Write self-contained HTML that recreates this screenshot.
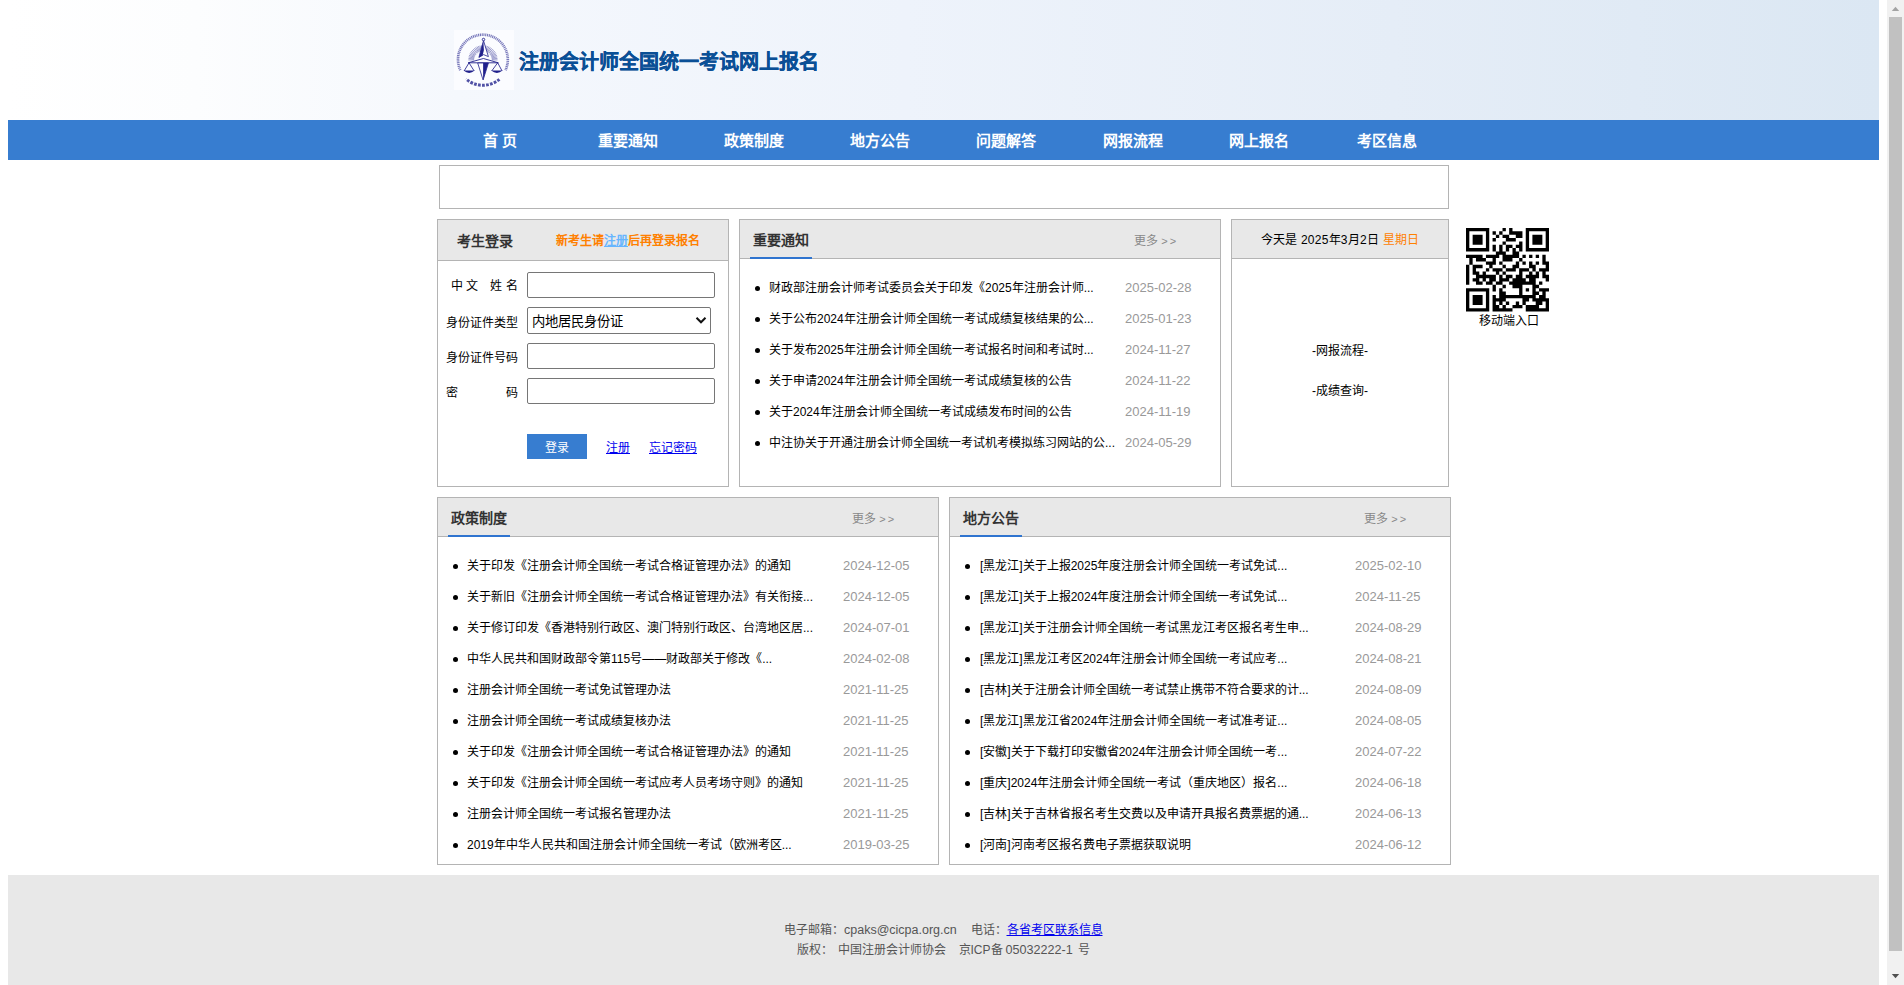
<!DOCTYPE html>
<html lang="zh-CN">
<head>
<meta charset="utf-8">
<title>注册会计师全国统一考试网上报名</title>
<style>
*{box-sizing:border-box;}
html,body{margin:0;padding:0;}
html{overflow:hidden;background:#fff;}
body{width:1904px;height:985px;position:relative;overflow:hidden;background:#fff;
  font-family:"Liberation Sans",sans-serif;font-size:12px;color:#000;}
a{color:#0000ee;text-decoration:underline;}
.abs{position:absolute;}
/* header */
#hdr{position:absolute;left:8px;top:0;width:1871px;height:120px;
  background:linear-gradient(90deg,#ffffff 0%,#fcfdfe 10%,#f5f8fd 24%,#eef3fb 48%,#e5edf7 74%,#dbe7f3 100%);}
#logo{position:absolute;left:454px;top:30px;width:60px;height:60px;background:#fbfcff;}
#title{position:absolute;left:519px;top:47px;height:30px;line-height:30px;font-size:20px;font-weight:bold;color:#0a4f96;-webkit-text-stroke:0.3px #0a4f96;white-space:nowrap;letter-spacing:0;}
/* nav */
#nav{position:absolute;left:8px;top:120px;width:1871px;height:40px;background:#377dd0;}
#nav span{position:absolute;top:0;width:126px;height:40px;line-height:42px;text-align:center;color:#fff;font-size:15px;font-weight:bold;white-space:nowrap;}
/* boxes */
.box{position:absolute;border:1px solid #b4b4b4;background:#fff;}
.hd{position:absolute;left:0;top:0;right:0;background:#e8e8e8;border-bottom:1px solid #b4b4b4;}
.hd .t{position:absolute;left:10px;top:0;width:62px;text-align:center;font-size:14px;font-weight:bold;color:#333;border-bottom:2px solid #2f74cf;white-space:nowrap;}
.more{position:absolute;font-size:12px;color:#888;white-space:nowrap;}
ul.lst{position:absolute;left:0;right:0;margin:0;padding:0;list-style:none;}
ul.lst li{position:relative;height:31px;line-height:31px;white-space:nowrap;font-size:12px;color:#000;}
ul.lst li:before{content:"";position:absolute;left:14.5px;top:13.5px;width:5px;height:5px;border-radius:50%;background:#000;}
ul.lst li b{font-weight:normal;position:absolute;left:30px;top:1px;}
ul.lst li i{font-style:normal;position:absolute;top:0;color:#999;font-size:13px;}
/* footer */
#ft{position:absolute;left:8px;top:875px;width:1871px;height:120px;background:#e8e8e8;color:#555;font-size:12px;text-align:center;}
#ft div{position:absolute;left:0;right:0;height:20px;line-height:20px;white-space:nowrap;}
/* scrollbar */
#sb{position:absolute;left:1887px;top:0;width:17px;height:985px;background:#f1f1f1;}
#sb .th{position:absolute;left:2px;top:17px;width:13px;height:934px;background:#c1c1c1;}
#sb .up{position:absolute;left:5px;top:7px;width:0;height:0;border-left:3.5px solid transparent;border-right:3.5px solid transparent;border-bottom:4px solid #a3a3a3;}
#sb .dn{position:absolute;left:5px;top:974px;width:0;height:0;border-left:3.5px solid transparent;border-right:3.5px solid transparent;border-top:4px solid #505050;}
/* form */
.lb{position:absolute;left:8px;width:72px;height:20px;line-height:20px;font-size:12px;color:#000;text-align:justify;text-align-last:justify;white-space:nowrap;}
.inp{position:absolute;left:89px;width:188px;height:26px;border:1px solid #767676;border-radius:2px;background:#fff;}
</style>
</head>
<body>
<div id="hdr"></div>
<div id="logo"><svg width="60" height="60" viewBox="0 0 60 60" style="display:block"><path d="M6.33 40.12A24.90 24.90 0 1 1 51.47 40.12" fill="none" stroke="#20208c" stroke-width="2.7" stroke-dasharray="1.1 0.7" opacity=".6"/><path d="M45.42 49.29A25.70 25.70 0 0 1 12.04 49.00" fill="none" stroke="#20208c" stroke-width="3" stroke-dasharray="2.7 1.3" opacity=".78"/><path d="M20.05 29.90L14.35 29.90M20.10 28.97L14.43 28.37M20.24 28.05L14.67 26.86M20.49 27.15L15.06 25.39M20.82 26.28L15.61 23.96M21.24 25.45L16.31 22.60M21.75 24.67L17.14 21.32M22.34 23.94L18.10 20.13M22.99 23.29L19.18 19.05M23.72 22.70L20.37 18.09M24.50 22.19L21.65 17.26M25.33 21.77L23.01 16.56M26.20 21.44L24.44 16.01M27.10 21.19L25.91 15.62M28.02 21.05L27.42 15.38M28.95 21.00L28.95 15.30M29.88 21.05L30.48 15.38M30.80 21.19L31.99 15.62M31.70 21.44L33.46 16.01M32.57 21.77L34.89 16.56M33.40 22.19L36.25 17.26M34.18 22.70L37.53 18.09M34.91 23.29L38.72 19.05M35.56 23.94L39.80 20.13M36.15 24.67L40.76 21.32M36.66 25.45L41.59 22.60M37.08 26.28L42.29 23.96M37.41 27.15L42.84 25.39M37.66 28.05L43.23 26.86M37.80 28.97L43.47 28.37M37.85 29.90L43.55 29.90" fill="none" stroke="#20208c" stroke-width=".55" opacity=".8"/><path d="M14.2 32.8L29.4 28.5L44.3 32.8z" fill="#fdfdff" stroke="#20208c" stroke-width=".9" stroke-linejoin="round"/><path d="M29.5 10.6L34.4 26.6L29.6 24.6L24.9 27.4z" fill="#fdfdff" stroke="#20208c" stroke-width=".8" stroke-linejoin="round"/><path d="M29.3 11.2L24.9 27.4L28.6 25.6L29.9 20z" fill="#20208c"/><path d="M23.7 33L34.4 33L29.1 50z" fill="#fdfdff" stroke="#20208c" stroke-width=".8" stroke-linejoin="round"/><path d="M29.1 33L34.4 33L29.1 50z" fill="#20208c"/><circle cx="29.5" cy="9.5" r="1.25" fill="#fdfdff" stroke="#20208c" stroke-width=".9"/><path d="M10.1 41L15.0 32.8L20.2 41" fill="none" stroke="#20208c" stroke-width=".85" stroke-linejoin="round"/><path d="M9.6 40.6L20.7 40.6Q15.1 45.2 9.6 40.6z" fill="#20208c"/><path d="M37.7 41L43.7 32.8L48.1 41" fill="none" stroke="#20208c" stroke-width=".85" stroke-linejoin="round"/><path d="M37.2 40.6L48.6 40.6Q42.9 45.2 37.2 40.6z" fill="#20208c"/></svg></div>
<div id="title">注册会计师全国统一考试网上报名</div>

<div id="nav">
  <span style="left:429px">首 页</span>
  <span style="left:557px">重要通知</span>
  <span style="left:683px">政策制度</span>
  <span style="left:809px">地方公告</span>
  <span style="left:935px">问题解答</span>
  <span style="left:1062px">网报流程</span>
  <span style="left:1188px">网上报名</span>
  <span style="left:1316px">考区信息</span>
</div>

<!-- banner -->
<div class="box" style="left:439px;top:165px;width:1010px;height:44px;"></div>

<!-- login -->
<div class="box" id="login" style="left:437px;top:219px;width:292px;height:268px;">
  <div class="hd" style="height:41px;">
    <div class="abs" style="left:19px;top:1px;height:40px;line-height:41px;font-size:14px;font-weight:bold;color:#333;white-space:nowrap;">考生登录</div>
    <div class="abs" style="left:118px;top:1px;height:40px;line-height:41px;font-size:12px;font-weight:bold;color:#ff8000;white-space:nowrap;">新考生请<span style="color:#66b5ff;text-decoration:underline;">注册</span>后再登录报名</div>
  </div>
  <div class="lb" style="top:56px;text-align:left;text-align-last:left;"><span class="abs" style="left:5px">中</span><span class="abs" style="left:20px">文</span><span class="abs" style="left:44px">姓</span><span class="abs" style="left:60px">名</span></div>
  <div class="inp" style="top:52px;"></div>
  <div class="lb" style="top:93px;">身份证件类型</div>
  <div class="inp" style="top:87px;width:184px;height:27px;"><span class="abs" style="left:4px;top:1px;height:25px;line-height:25px;font-size:13.33px;white-space:nowrap;">内地居民身份证</span>
    <svg class="abs" style="left:167px;top:8px;" width="12" height="9" viewBox="0 0 12 9"><path d="M1.5 1.8 L6 6.3 L10.5 1.8" fill="none" stroke="#111" stroke-width="2"/></svg></div>
  <div class="lb" style="top:128px;">身份证件号码</div>
  <div class="inp" style="top:123px;"></div>
  <div class="lb" style="top:163px;text-align:left;text-align-last:left;"><span class="abs" style="left:0">密</span><span class="abs" style="left:60px">码</span></div>
  <div class="inp" style="top:158px;"></div>
  <div class="abs" style="left:89px;top:214px;width:60px;height:25px;line-height:29px;background:#377dd0;color:#fff;font-size:12px;text-align:center;">登录</div>
  <a class="abs" style="left:168px;top:218px;height:20px;line-height:20px;font-size:12px;white-space:nowrap;">注册</a>
  <a class="abs" style="left:211px;top:218px;height:20px;line-height:20px;font-size:12px;white-space:nowrap;">忘记密码</a>
</div>

<!-- notice -->
<div class="box" id="notice" style="left:739px;top:219px;width:482px;height:268px;">
  <div class="hd" style="height:39px;"><div class="t" style="height:39px;line-height:40px;">重要通知</div><div class="more" style="left:395px;top:0;height:38px;line-height:42px;margin-left:-1px;">更多 <span style="letter-spacing:2px;font-size:11px">&gt;&gt;</span></div></div>
  <ul class="lst" style="top:52px;">
    <li><b style="left:29px">财政部注册会计师考试委员会关于印发《2025年注册会计师...</b><i style="left:385px">2025-02-28</i></li>
    <li><b style="left:29px">关于公布2024年注册会计师全国统一考试成绩复核结果的公...</b><i style="left:385px">2025-01-23</i></li>
    <li><b style="left:29px">关于发布2025年注册会计师全国统一考试报名时间和考试时...</b><i style="left:385px">2024-11-27</i></li>
    <li><b style="left:29px">关于申请2024年注册会计师全国统一考试成绩复核的公告</b><i style="left:385px">2024-11-22</i></li>
    <li><b style="left:29px">关于2024年注册会计师全国统一考试成绩发布时间的公告</b><i style="left:385px">2024-11-19</i></li>
    <li><b style="left:29px">中注协关于开通注册会计师全国统一考试机考模拟练习网站的公...</b><i style="left:385px">2024-05-29</i></li>
  </ul>
</div>

<!-- date -->
<div class="box" id="date" style="left:1231px;top:219px;width:218px;height:268px;">
  <div class="hd" style="height:39px;line-height:41px;text-align:center;font-size:12px;color:#000;white-space:nowrap;letter-spacing:.22px;">今天是 2025年3月2日 <span style="color:#ff8000">星期日</span></div>
  <div class="abs" style="left:0;right:0;top:121px;height:20px;line-height:20px;text-align:center;">-网报流程-</div>
  <div class="abs" style="left:0;right:0;top:161px;height:20px;line-height:20px;text-align:center;">-成绩查询-</div>
</div>
<div class="abs" id="qr" style="left:1466px;top:228.4px;width:83px;height:83.6px;"><svg width="83" height="83.6" viewBox="0 0 25 25" preserveAspectRatio="none" style="display:block"><rect width="25" height="25" fill="#fff"/><path d="M0 0h7v1h-7zM11 0h1v1h-1zM13 0h1v1h-1zM18 0h7v1h-7zM0 1h1v1h-1zM6 1h1v1h-1zM8 1h1v1h-1zM10 1h1v1h-1zM13 1h4v1h-4zM18 1h1v1h-1zM24 1h1v1h-1zM0 2h1v1h-1zM2 2h3v1h-3zM6 2h1v1h-1zM9 2h1v1h-1zM11 2h2v1h-2zM15 2h2v1h-2zM18 2h1v1h-1zM20 2h3v1h-3zM24 2h1v1h-1zM0 3h1v1h-1zM2 3h3v1h-3zM6 3h1v1h-1zM8 3h1v1h-1zM12 3h3v1h-3zM18 3h1v1h-1zM20 3h3v1h-3zM24 3h1v1h-1zM0 4h1v1h-1zM2 4h3v1h-3zM6 4h1v1h-1zM11 4h1v1h-1zM16 4h1v1h-1zM18 4h1v1h-1zM20 4h3v1h-3zM24 4h1v1h-1zM0 5h1v1h-1zM6 5h1v1h-1zM8 5h1v1h-1zM10 5h1v1h-1zM12 5h2v1h-2zM15 5h2v1h-2zM18 5h1v1h-1zM24 5h1v1h-1zM0 6h7v1h-7zM8 6h1v1h-1zM10 6h1v1h-1zM12 6h1v1h-1zM14 6h1v1h-1zM16 6h1v1h-1zM18 6h7v1h-7zM9 7h3v1h-3zM14 7h2v1h-2zM0 8h5v1h-5zM6 8h4v1h-4zM11 8h5v1h-5zM17 8h1v1h-1zM19 8h1v1h-1zM21 8h1v1h-1zM23 8h1v1h-1zM1 9h1v1h-1zM3 9h3v1h-3zM8 9h1v1h-1zM11 9h3v1h-3zM16 9h1v1h-1zM23 9h1v1h-1zM1 10h1v1h-1zM6 10h3v1h-3zM10 10h1v1h-1zM15 10h1v1h-1zM17 10h1v1h-1zM19 10h1v1h-1zM21 10h1v1h-1zM23 10h2v1h-2zM0 11h1v1h-1zM2 11h3v1h-3zM7 11h1v1h-1zM11 11h1v1h-1zM14 11h2v1h-2zM19 11h2v1h-2zM24 11h1v1h-1zM0 12h1v1h-1zM2 12h1v1h-1zM6 12h1v1h-1zM8 12h3v1h-3zM12 12h3v1h-3zM16 12h3v1h-3zM20 12h1v1h-1zM22 12h3v1h-3zM0 13h1v1h-1zM2 13h2v1h-2zM5 13h1v1h-1zM9 13h1v1h-1zM11 13h1v1h-1zM16 13h1v1h-1zM19 13h1v1h-1zM21 13h1v1h-1zM23 13h1v1h-1zM0 14h1v1h-1zM3 14h6v1h-6zM10 14h1v1h-1zM12 14h2v1h-2zM15 14h2v1h-2zM18 14h4v1h-4zM23 14h2v1h-2zM0 15h1v1h-1zM2 15h2v1h-2zM5 15h1v1h-1zM7 15h2v1h-2zM10 15h3v1h-3zM14 15h4v1h-4zM19 15h2v1h-2zM24 15h1v1h-1zM0 16h1v1h-1zM3 16h2v1h-2zM6 16h2v1h-2zM9 16h2v1h-2zM13 16h8v1h-8zM22 16h1v1h-1zM8 17h1v1h-1zM11 17h1v1h-1zM14 17h3v1h-3zM20 17h2v1h-2zM0 18h7v1h-7zM8 18h1v1h-1zM10 18h1v1h-1zM16 18h1v1h-1zM18 18h1v1h-1zM20 18h1v1h-1zM22 18h3v1h-3zM0 19h1v1h-1zM6 19h1v1h-1zM10 19h2v1h-2zM16 19h1v1h-1zM20 19h2v1h-2zM23 19h1v1h-1zM0 20h1v1h-1zM2 20h3v1h-3zM6 20h1v1h-1zM8 20h1v1h-1zM10 20h11v1h-11zM22 20h2v1h-2zM0 21h1v1h-1zM2 21h3v1h-3zM6 21h1v1h-1zM8 21h4v1h-4zM17 21h2v1h-2zM20 21h5v1h-5zM0 22h1v1h-1zM2 22h3v1h-3zM6 22h1v1h-1zM8 22h1v1h-1zM10 22h1v1h-1zM12 22h1v1h-1zM15 22h1v1h-1zM17 22h1v1h-1zM21 22h2v1h-2zM24 22h1v1h-1zM0 23h1v1h-1zM6 23h1v1h-1zM8 23h2v1h-2zM11 23h1v1h-1zM14 23h3v1h-3zM18 23h4v1h-4zM24 23h1v1h-1zM0 24h7v1h-7zM8 24h6v1h-6zM18 24h7v1h-7z" fill="#000"/></svg></div>
<div class="abs" style="left:1459px;top:311px;width:100px;height:20px;line-height:20px;text-align:center;font-size:12px;white-space:nowrap;">移动端入口</div>

<!-- policy -->
<div class="box" id="policy" style="left:437px;top:497px;width:502px;height:368px;">
  <div class="hd" style="height:39px;"><div class="t" style="height:39px;line-height:40px;">政策制度</div><div class="more" style="left:415px;top:0;height:38px;line-height:42px;margin-left:-1px;">更多 <span style="letter-spacing:2px;font-size:11px">&gt;&gt;</span></div></div>
  <ul class="lst" style="top:52px;">
    <li><b style="left:29px">关于印发《注册会计师全国统一考试合格证管理办法》的通知</b><i style="left:405px">2024-12-05</i></li>
    <li><b style="left:29px">关于新旧《注册会计师全国统一考试合格证管理办法》有关衔接...</b><i style="left:405px">2024-12-05</i></li>
    <li><b style="left:29px">关于修订印发《香港特别行政区、澳门特别行政区、台湾地区居...</b><i style="left:405px">2024-07-01</i></li>
    <li><b style="left:29px">中华人民共和国财政部令第115号——财政部关于修改《...</b><i style="left:405px">2024-02-08</i></li>
    <li><b style="left:29px">注册会计师全国统一考试免试管理办法</b><i style="left:405px">2021-11-25</i></li>
    <li><b style="left:29px">注册会计师全国统一考试成绩复核办法</b><i style="left:405px">2021-11-25</i></li>
    <li><b style="left:29px">关于印发《注册会计师全国统一考试合格证管理办法》的通知</b><i style="left:405px">2021-11-25</i></li>
    <li><b style="left:29px">关于印发《注册会计师全国统一考试应考人员考场守则》的通知</b><i style="left:405px">2021-11-25</i></li>
    <li><b style="left:29px">注册会计师全国统一考试报名管理办法</b><i style="left:405px">2021-11-25</i></li>
    <li><b style="left:29px">2019年中华人民共和国注册会计师全国统一考试（欧洲考区...</b><i style="left:405px">2019-03-25</i></li>
  </ul>
</div>

<!-- local -->
<div class="box" id="local" style="left:949px;top:497px;width:502px;height:368px;">
  <div class="hd" style="height:39px;"><div class="t" style="height:39px;line-height:40px;">地方公告</div><div class="more" style="left:415px;top:0;height:38px;line-height:42px;margin-left:-1px;">更多 <span style="letter-spacing:2px;font-size:11px">&gt;&gt;</span></div></div>
  <ul class="lst" style="top:52px;">
    <li><b style="left:30px">[黑龙江]关于上报2025年度注册会计师全国统一考试免试...</b><i style="left:405px">2025-02-10</i></li>
    <li><b style="left:30px">[黑龙江]关于上报2024年度注册会计师全国统一考试免试...</b><i style="left:405px">2024-11-25</i></li>
    <li><b style="left:30px">[黑龙江]关于注册会计师全国统一考试黑龙江考区报名考生申...</b><i style="left:405px">2024-08-29</i></li>
    <li><b style="left:30px">[黑龙江]黑龙江考区2024年注册会计师全国统一考试应考...</b><i style="left:405px">2024-08-21</i></li>
    <li><b style="left:30px">[吉林]关于注册会计师全国统一考试禁止携带不符合要求的计...</b><i style="left:405px">2024-08-09</i></li>
    <li><b style="left:30px">[黑龙江]黑龙江省2024年注册会计师全国统一考试准考证...</b><i style="left:405px">2024-08-05</i></li>
    <li><b style="left:30px">[安徽]关于下载打印安徽省2024年注册会计师全国统一考...</b><i style="left:405px">2024-07-22</i></li>
    <li><b style="left:30px">[重庆]2024年注册会计师全国统一考试（重庆地区）报名...</b><i style="left:405px">2024-06-18</i></li>
    <li><b style="left:30px">[吉林]关于吉林省报名考生交费以及申请开具报名费票据的通...</b><i style="left:405px">2024-06-13</i></li>
    <li><b style="left:30px">[河南]河南考区报名费电子票据获取说明</b><i style="left:405px">2024-06-12</i></li>
  </ul>
</div>

<div id="ft">
  <div style="top:45px;text-align:left;">
    <span class="abs" style="left:776px">电子邮箱：</span>
    <span class="abs" style="left:836px;font-size:12.5px">cpaks@cicpa.org.cn</span>
    <span class="abs" style="left:963px">电话：</span>
    <a class="abs" style="left:998.5px">各省考区联系信息</a>
  </div>
  <div style="top:65px;text-align:left;">
    <span class="abs" style="left:789px">版权：</span>
    <span class="abs" style="left:829.5px">中国注册会计师协会</span>
    <span class="abs" style="left:950.5px">京ICP备</span>
    <span class="abs" style="left:997.5px;font-size:12.6px">05032222-1</span>
    <span class="abs" style="left:1070px">号</span>
  </div>
</div>

<div id="sb"><svg class="abs" style="left:0;top:0" width="17" height="17" viewBox="0 0 17 17"><path d="M4.8 11L8.5 6.8L12.2 11z" fill="#a3a3a3"/></svg><div class="th"></div><svg class="abs" style="left:0;top:968px" width="17" height="17" viewBox="0 0 17 17"><path d="M4.8 6L12.2 6L8.5 10.2z" fill="#505050"/></svg></div>
</body>
</html>
